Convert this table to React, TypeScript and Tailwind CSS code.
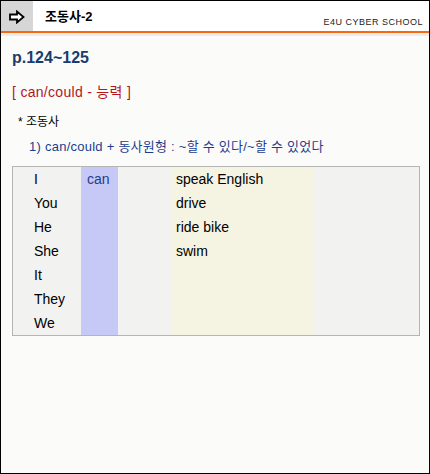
import React from "react"

const rows = ["I", "You", "He", "She", "It", "They", "We"]
const verbs = ["speak English", "drive", "ride bike", "swim", "", "", ""]

function ArrowIcon() {
  return (
    <svg width="16" height="14" viewBox="0 0 16 14" className="block">
      <path
        d="M1 4.5 H8 V1.5 L14.5 7 L8 12.5 V9.5 H1 Z"
        fill="white"
        stroke="black"
        strokeWidth="1.8"
        strokeLinejoin="miter"
      />
    </svg>
  )
}

export default function App() {
  const font = { fontFamily: '"Liberation Sans", "Noto Sans CJK KR", sans-serif' }

  return (
    <div
      className="w-[430px] h-[474px] border border-black bg-[#fbfcfa] flex flex-col overflow-hidden"
      style={font}
    >
      {/* header */}
      <div className="h-[30px] flex bg-white">
        <div className="w-[32px] bg-[#d6d6d6] flex items-center justify-center pt-[2px]">
          <ArrowIcon />
        </div>
        <div className="flex-1 flex items-center pl-[12px] pt-[2px] text-[13px] font-bold text-black">
          조동사-2
        </div>
        <div className="flex items-end pb-[2px] pr-[6px] text-[9px] tracking-[0.5px] text-[#222]">
          E4U CYBER SCHOOL
        </div>
      </div>
      <div className="h-[2px] bg-[#f36a12]" />
      <div className="h-[3px] bg-[#ececec]" />

      {/* content */}
      <div className="flex flex-col px-[11px]">
        <div className="mt-[12px] h-[20px] flex items-center text-[16px] font-bold text-[#1b3c6e]">
          p.124~125
        </div>
        <div className="mt-[14px] h-[20px] flex items-center text-[14px] tracking-[0.3px] text-[#b3161b]">
          [ can/could - 능력 ]
        </div>
        <div className="mt-[10px] h-[20px] flex items-center pl-[6px] text-[12px] text-black">
          * 조동사
        </div>
        <div className="mt-[5px] h-[20px] flex items-center pl-[17px] text-[13px] tracking-[0.25px] text-[#1d3c90]">
          1) can/could + 동사원형 : ~할 수 있다/~할 수 있었다
        </div>

        {/* table */}
        <div className="mt-[9px] w-[408px] border border-[#b5b5b5] bg-[#f2f3f0] flex text-[14px] text-black">
          <div className="w-[68px] flex flex-col">
            {rows.map((r) => (
              <div key={r} className="h-[24px] flex items-center pl-[21px]">
                {r}
              </div>
            ))}
          </div>
          <div className="w-[37px] bg-[#c6c9f6] flex flex-col">
            <div className="h-[24px] flex items-center pl-[6px] text-[#1d3c90]">can</div>
          </div>
          <div className="w-[54px]" />
          <div className="w-[142px] bg-[#f5f3e2] flex flex-col">
            {verbs.map((v, i) => (
              <div key={i} className="h-[24px] flex items-center pl-[4px]">
                {v}
              </div>
            ))}
          </div>
          <div className="flex-1" />
        </div>
      </div>
    </div>
  )
}
